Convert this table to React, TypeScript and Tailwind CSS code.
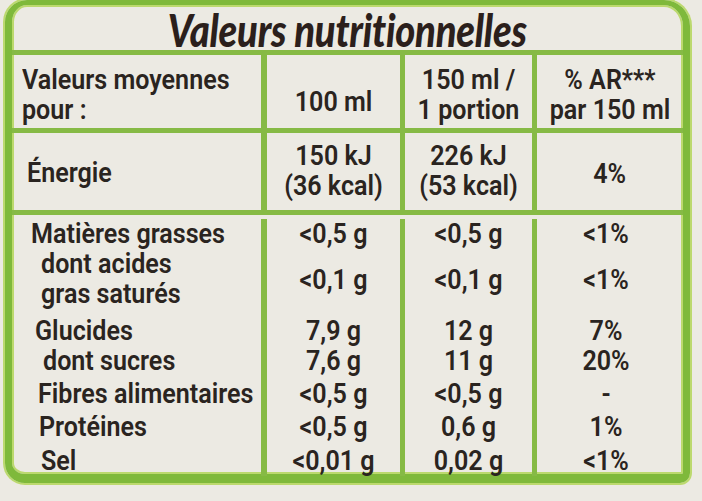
const body = "font-['Roboto',_'Liberation_Sans',_sans-serif] font-semibold text-[27px] text-[#2a2420]";

const rows = [
  { label: ["Matières grasses"], v: ["<0,5 g", "<0,5 g", "<1%"], h: "h-[34px] pt-[4px]", pl: "pl-[19px]", vpt: "" },
  { label: ["dont acides", "gras saturés"], v: ["<0,1 g", "<0,1 g", "<1%"], h: "h-[67px]", pl: "pl-[29px]", vpt: "pt-[16px]" },
  { label: ["Glucides"], v: ["7,9 g", "12 g", "7%"], h: "h-[30px]", pl: "pl-[23px]", vpt: "" },
  { label: ["dont sucres"], v: ["7,6 g", "11 g", "20%"], h: "h-[33px]", pl: "pl-[31px]", vpt: "" },
  { label: ["Fibres alimentaires"], v: ["<0,5 g", "<0,5 g", "-"], h: "h-[33px]", pl: "pl-[26px]", vpt: "" },
  { label: ["Protéines"], v: ["<0,5 g", "0,6 g", "1%"], h: "h-[34px]", pl: "pl-[27px]", vpt: "" },
  { label: ["Sel"], v: ["<0,01 g", "0,02 g", "<1%"], h: "h-[28px]", pl: "pl-[29px]", vpt: "" },
];

const line = "border-[#86ba45]";

// condensed text: squeeze horizontally, left or centred
function L({ children }: { children: React.ReactNode }) {
  return <div className="origin-left scale-x-[0.93] whitespace-nowrap">{children}</div>;
}
function C({ children }: { children: React.ReactNode }) {
  return <div className="scale-x-[0.93] whitespace-nowrap text-center">{children}</div>;
}

export default function App() {
  return (
    <div className="w-[702px] h-[501px] bg-[#eceae3] overflow-hidden">
      <div
        className={`ml-[5px] w-[685px] border-x-[7px] border-t-[5px] border-b-[9px] border-[#7fb93b] rounded-tl-[22px] rounded-tr-[26px] rounded-bl-[20px] rounded-br-[10px] shadow-[0_0_0_2px_#bcd96e,inset_0_0_0_2px_#bcd96e] ${body} leading-[30px]`}
      >
        {/* Title */}
        <div className={`h-[50px] border-b-[5px] ${line} flex justify-center pt-[2px]`}>
          <span className="inline-block scale-x-[0.83] font-['Lato',_sans-serif] font-black italic text-[46px] leading-[45px] text-[#2b1f1c] tracking-[-0.3px]">
            Valeurs nutritionnelles
          </span>
        </div>

        {/* Header */}
        <div className={`grid grid-cols-[255px_138px_132px_1fr] h-[78px] border-b-[5px] ${line}`}>
          <div className={`border-r-[6px] ${line} pl-[10px] pt-[10px]`}>
            <L>Valeurs moyennes</L>
            <L>pour :</L>
          </div>
          <div className={`border-r-[5px] ${line} pt-[32px]`}>
            <C>100 ml</C>
          </div>
          <div className={`border-r-[5px] ${line} pt-[10px]`}>
            <C>150 ml /</C>
            <C>1 portion</C>
          </div>
          <div className="pt-[10px]">
            <C>% AR***</C>
            <C>par 150 ml</C>
          </div>
        </div>

        {/* Energy */}
        <div className={`grid grid-cols-[255px_138px_132px_1fr] h-[82px] border-b-[5px] ${line}`}>
          <div className={`border-r-[6px] ${line} pl-[15px] flex items-center pt-[2px]`}>
            <L>Énergie</L>
          </div>
          <div className={`border-r-[5px] ${line} pt-[8px]`}>
            <C>150 kJ</C>
            <C>(36 kcal)</C>
          </div>
          <div className={`border-r-[5px] ${line} pt-[8px]`}>
            <C>226 kJ</C>
            <C>(53 kcal)</C>
          </div>
          <div className="flex items-center justify-center pt-[4px]">
            <C>4%</C>
          </div>
        </div>

        {/* Body */}
        <div className="flex flex-col">
          {rows.map((r) => (
            <div key={r.label[0]} className={`grid grid-cols-[255px_138px_132px_1fr] ${r.h}`}>
              <div className={`border-r-[6px] ${line} ${r.pl}`}>
                {r.label.map((l) => (
                  <L key={l}>{l}</L>
                ))}
              </div>
              <div className={`border-r-[5px] ${line} ${r.vpt}`}>
                <C>{r.v[0]}</C>
              </div>
              <div className={`border-r-[5px] ${line} ${r.vpt}`}>
                <C>{r.v[1]}</C>
              </div>
              <div className={`pr-[8px] ${r.vpt}`}>
                <C>{r.v[2]}</C>
              </div>
            </div>
          ))}
        </div>
      </div>
    </div>
  );
}
